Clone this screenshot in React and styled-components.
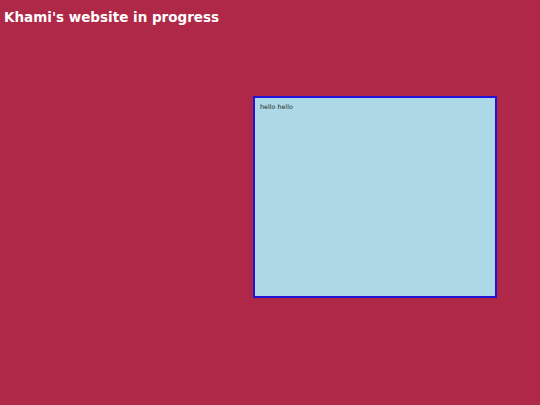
import React from "react";
import styled, { createGlobalStyle } from "styled-components";

const Global = createGlobalStyle`
  html, body { margin: 0; padding: 0; background: #af2847; }
  body { font-family: "DejaVu Sans", Verdana, sans-serif; }
`;

const Page = styled.div`
  width: 540px;
  height: 405px;
  background: #af2847;
  display: flex;
  flex-direction: column;
`;

const Title = styled.h1`
  margin: 8px 0 0 4px;
  font-size: 13.5px;
  font-weight: bold;
  color: #ffffff;
  line-height: 18px;
`;

const Row = styled.div`
  display: flex;
  padding-left: 253px;
  margin-top: 70px;
`;

const Box = styled.div`
  box-sizing: border-box;
  width: 244px;
  height: 202px;
  background: #add8e6;
  border: 2px solid #2412d8;
  padding: 5px 5px;
  font-family: "DejaVu Sans", Verdana, sans-serif;
  font-size: 6.4px;
  color: #222;
`;

export default function App() {
  return (
    <Page>
      <Global />
      <Title>Khami's website in progress</Title>
      <Row>
        <Box>hello hello</Box>
      </Row>
    </Page>
  );
}
